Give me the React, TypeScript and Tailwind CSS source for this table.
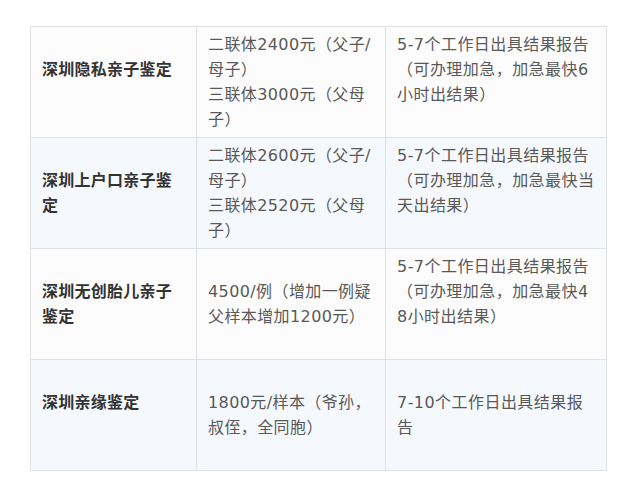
import React from "react";

const rows = [
  {
    name: ["深圳隐私亲子鉴定", ""],
    price: ["二联体2400元（父子/", "母子）", "三联体3000元（父母", "子）"],
    time: ["5-7个工作日出具结果报告", "（可办理加急，加急最快6", "小时出结果）", ""],
  },
  {
    name: ["深圳上户口亲子鉴", "定"],
    price: ["二联体2600元（父子/", "母子）", "三联体2520元（父母", "子）"],
    time: ["5-7个工作日出具结果报告", "（可办理加急，加急最快当", "天出结果）", ""],
  },
  {
    name: ["深圳无创胎儿亲子", "鉴定"],
    price: ["4500/例（增加一例疑", "父样本增加1200元）"],
    time: ["5-7个工作日出具结果报告", "（可办理加急，加急最快4", "8小时出结果）", ""],
  },
  {
    name: ["深圳亲缘鉴定", ""],
    price: ["1800元/样本（爷孙，", "叔侄，全同胞）"],
    time: ["7-10个工作日出具结果报", "告"],
  },
];

function Lines({ lines }: { lines: string[] }) {
  return (
    <>
      {lines.map((l, j) => (
        <div key={j} className="whitespace-nowrap h-[25px]">
          {l}
        </div>
      ))}
    </>
  );
}

export default function App() {
  return (
    <div
      className="w-[642px] h-[492px] bg-white pt-[26px] pl-[30px]"
      style={{ fontFamily: '"DejaVu Sans", "Noto Sans CJK SC", sans-serif' }}
    >
      <table className="table-fixed border-collapse w-[576px] text-[16px] leading-[25px]">
        <colgroup>
          <col className="w-[166px]" />
          <col className="w-[189px]" />
          <col className="w-[221px]" />
        </colgroup>
        <tbody>
          {rows.map((r, i) => (
            <tr
              key={i}
              className={`h-[111px] ${i % 2 === 1 ? "bg-[#f5f8fc]" : "bg-[#fcfcfc]"}`}
            >
              <td className="border border-[#dfe2e5] px-[11px] py-[5px] align-middle font-bold text-[#333333] tracking-[0.25px]">
                <Lines lines={r.name} />
              </td>
              <td className="border border-[#dfe2e5] px-[11px] py-[5px] align-middle text-[#595959] tracking-[0.4px]">
                <Lines lines={r.price} />
              </td>
              <td className="border border-[#dfe2e5] px-[11px] py-[5px] align-middle text-[#595959] tracking-[0.45px]">
                <Lines lines={r.time} />
              </td>
            </tr>
          ))}
        </tbody>
      </table>
    </div>
  );
}
